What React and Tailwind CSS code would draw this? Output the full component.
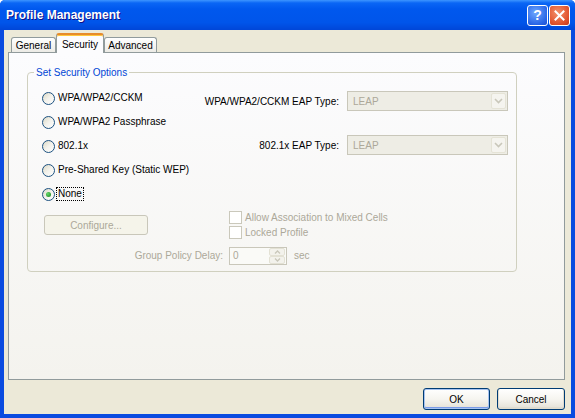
import React from "react";

const F = "font-['Liberation_Sans',Arial,sans-serif]";

function Radio({ checked }) {
  return (
    <span className="w-[13px] h-[13px] rounded-full border border-[#1C5180] bg-gradient-to-br from-[#DCD9C5] via-[#F3F2EC] to-white flex items-center justify-center shrink-0">
      {checked && (
        <span className="w-[5px] h-[5px] rounded-full bg-[radial-gradient(circle_at_35%_35%,#63D96A,#1A7F1A)]" />
      )}
    </span>
  );
}

function RadioRow({ label, checked }) {
  return (
    <div className="h-[24px] flex items-center gap-[3px]">
      <Radio checked={checked} />
      <span
        className={
          checked
            ? "leading-[12px] px-[1px] outline outline-1 outline-dotted outline-black -ml-[1px]"
            : "leading-[12px]"
        }
      >
        {label}
      </span>
    </div>
  );
}

function Chevron() {
  return (
    <svg width="9" height="6" viewBox="0 0 9 6">
      <path d="M1 1 L4.5 4.5 L8 1" fill="none" stroke="#C9C7BA" strokeWidth="1.6" />
    </svg>
  );
}

function Select() {
  return (
    <div className="w-[161px] h-[20px] border border-[#C9C7BA] bg-[#EEEDE5] flex items-center">
      <span className="flex-1 pl-[5px] text-[#ACA899]">LEAP</span>
      <span className="w-[15px] h-[16px] mr-[1px] border border-[#E5E3D6] bg-[#F5F4EF] rounded-[2px] flex items-center justify-center">
        <Chevron />
      </span>
    </div>
  );
}

function Checkbox({ label }) {
  return (
    <div className="h-[15px] flex items-center gap-[3px]">
      <span className="w-[13px] h-[13px] border border-[#CAC8BB] bg-white shrink-0" />
      <span className="text-[#ACA899] leading-[12px]">{label}</span>
    </div>
  );
}

function Tab({ label, selected, w }) {
  if (selected) {
    return (
      <div
        className={`${w} h-[20px] -mb-[1px] relative z-10 border-x border-[#919B9C] border-t-2 border-t-[#E68B2C] rounded-t-[3px] bg-[#FCFCFE] shadow-[inset_0_1px_0_#FFC73C] flex items-start justify-center pt-[2px]`}
      >
        {label}
      </div>
    );
  }
  return (
    <div
      className={`${w} h-[15px] border-x border-t border-[#919B9C] rounded-t-[3px] bg-gradient-to-b from-white to-[#ECEBE6] flex items-center justify-center`}
    >
      {label}
    </div>
  );
}

function Button({ children, def, w }) {
  return (
    <div
      className={`${w} h-[22px] border border-[#003C74] rounded-[3px] bg-gradient-to-b from-white via-[#F6F5F0] to-[#E3E0D6] flex items-center justify-center ${
        def ? "shadow-[inset_0_0_0_1px_#A7C3F0,inset_0_-1px_0_1px_#7B9BE8]" : "shadow-[inset_0_-1px_0_1px_#E0DCCF]"
      }`}
    >
      {children}
    </div>
  );
}

export default function App() {
  return (
    <div className={`${F} text-[10px] text-black w-[575px] h-[418px] flex flex-col bg-[#0A4BE0] rounded-t-[5px] overflow-hidden`}>
      {/* Title bar */}
      <div className="h-[30px] shrink-0 flex items-center pl-[6px] pr-[5px] bg-[linear-gradient(to_bottom,#3D95FF_0%,#0A66F5_10%,#0058EE_30%,#0055EA_75%,#0046D8_100%)]">
        <span className="flex-1 text-white font-bold text-[12px] [text-shadow:1px_1px_#0F1089]">
          Profile Management
        </span>
        <div className="flex gap-[1px] items-center">
          <div className="w-[21px] h-[21px] rounded-[3px] border border-white bg-[radial-gradient(circle_at_40%_35%,#6FA8FF,#2A66E6_70%,#1C4FD0)] flex items-center justify-center text-white font-bold text-[14px] leading-none">
            ?
          </div>
          <div className="w-[21px] h-[21px] rounded-[3px] border border-white bg-[radial-gradient(circle_at_40%_35%,#F3926C,#E2542E_65%,#C8381A)] flex items-center justify-center">
            <svg width="11" height="11" viewBox="0 0 11 11">
              <path d="M1.5 1.5 L9.5 9.5 M9.5 1.5 L1.5 9.5" stroke="white" strokeWidth="2" strokeLinecap="square" />
            </svg>
          </div>
        </div>
      </div>

      {/* Body */}
      <div className="flex-1 mx-[4px] mb-[4px] bg-[#ECE9D8] flex flex-col pt-[3px]">
        {/* Tabs */}
        <div className="flex items-end pl-[7px] h-[19px]">
          <Tab label="General" w="w-[45px]" />
          <Tab label="Security" selected w="w-[48px]" />
          <Tab label="Advanced" w="w-[53px]" />
        </div>

        {/* Panel */}
        <div className="ml-[4px] w-[557px] h-[328px] border border-[#919B9C] bg-gradient-to-b from-[#FCFCFE] to-[#F4F3EE] pt-[13px] pl-[18px]">
          <fieldset className="w-[490px] border border-[#D0D0BF] rounded-[4px] pt-[7px] pb-[6px]">
            <legend className="ml-[6px] px-[2px] text-[#0046D5] leading-[13px]">Set Security Options</legend>

            <div className="flex">
              <div className="flex flex-col pl-[14px]">
                <RadioRow label="WPA/WPA2/CCKM" />
                <RadioRow label="WPA/WPA2 Passphrase" />
                <RadioRow label="802.1x" />
                <RadioRow label="Pre-Shared Key (Static WEP)" />
                <RadioRow label="None" checked />
              </div>
              <div className="flex-1 flex flex-col items-end pr-[8px] pt-[5px]">
                <div className="flex items-center gap-[8px]">
                  <span>WPA/WPA2/CCKM EAP Type:</span>
                  <Select />
                </div>
                <div className="flex items-center gap-[8px] mt-[24px]">
                  <span>802.1x EAP Type:</span>
                  <Select />
                </div>
              </div>
            </div>

            <div className="mt-[4px] pl-[16px] grid grid-cols-[179px_auto] gap-x-[6px]">
              <div className="row-span-2 self-center">
                <div className="w-[104px] h-[20px] border border-[#C9C7BA] rounded-[3px] bg-[#F5F4EA] text-[#ACA899] flex items-center justify-center">
                  Configure...
                </div>
              </div>
              <Checkbox label="Allow Association to Mixed Cells" />
              <Checkbox label="Locked Profile" />
              <div className="mt-[6px] h-[19px] flex items-center justify-end text-[#ACA899]">Group Policy Delay:</div>
              <div className="mt-[6px] h-[19px] flex items-center gap-[7px]">
                <div className="w-[58px] h-[18px] border border-[#C9C7BA] bg-[#FAFAF7] flex items-center">
                  <span className="flex-1 pl-[3px] text-[#ACA899]">0</span>
                  <div className="w-[16px] h-[16px] mr-[1px] flex flex-col gap-[0px]">
                    <div className="h-[8px] border border-[#E3E1D4] rounded-[2px] bg-[#F3F2EC] flex items-center justify-center">
                      <svg width="7" height="4" viewBox="0 0 7 4"><path d="M1 3.5 L3.5 1 L6 3.5" fill="none" stroke="#C9C7BA" strokeWidth="1.3" /></svg>
                    </div>
                    <div className="h-[8px] border border-[#E3E1D4] rounded-[2px] bg-[#F3F2EC] flex items-center justify-center">
                      <svg width="7" height="4" viewBox="0 0 7 4"><path d="M1 0.5 L3.5 3 L6 0.5" fill="none" stroke="#C9C7BA" strokeWidth="1.3" /></svg>
                    </div>
                  </div>
                </div>
                <span className="text-[#ACA899]">sec</span>
              </div>
            </div>
          </fieldset>
        </div>

        {/* Buttons */}
        <div className="mt-[8px] flex justify-end gap-[7px] pr-[6px]">
          <Button def w="w-[67px]">OK</Button>
          <Button w="w-[68px]">Cancel</Button>
        </div>
      </div>
    </div>
  );
}
